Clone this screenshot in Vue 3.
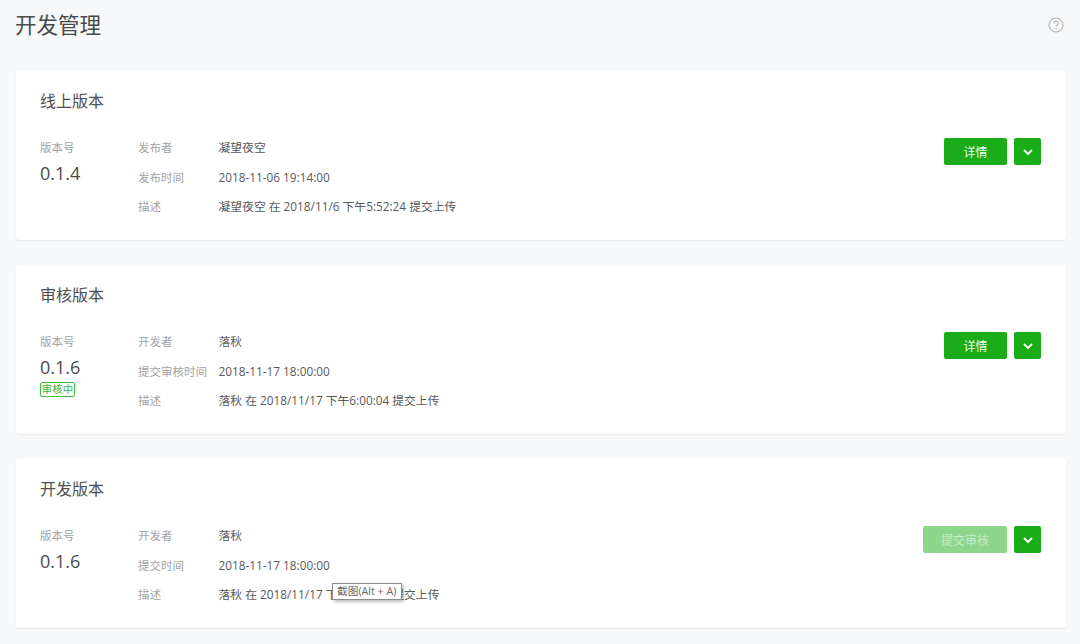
<template>
  <div class="page">
    <div class="page-head">
      <h1 class="page-title">开发管理</h1>
      <svg class="help" width="16" height="16" viewBox="0 0 16 16">
        <circle cx="8" cy="8" r="7" fill="none" stroke="#b5b5b5" stroke-width="1.2" />
        <path d="M5.9 6.3a2.1 2.1 0 1 1 3.3 1.7c-.8.5-1.2.9-1.2 1.8" fill="none" stroke="#b5b5b5" stroke-width="1.2" />
        <circle cx="8" cy="11.8" r=".8" fill="#b5b5b5" />
      </svg>
    </div>
    <section v-for="v in versions" :key="v.title" class="card">
      <h2 class="card-title">{{ v.title }}</h2>
      <div class="card-body">
        <div class="ver">
          <div class="label">版本号</div>
          <div class="ver-num">{{ v.version }}</div>
          <span v-if="v.tag" class="tag">{{ v.tag }}</span>
        </div>
        <div class="info">
          <template v-for="r in v.rows" :key="r[0]">
            <div class="label">{{ r[0] }}</div>
            <div class="val">{{ r[1] }}</div>
          </template>
          <div v-if="v.tip" class="tip">截图(Alt + A)</div>
        </div>
        <div class="actions">
          <button class="btn" :class="{ off: v.disabled }">{{ v.action }}</button>
          <button class="btn more">
            <svg width="12" height="12" viewBox="0 0 12 12">
              <path d="M2 4l4 4 4-4" fill="none" stroke="#fff" stroke-width="1.8" />
            </svg>
          </button>
        </div>
      </div>
    </section>
  </div>
</template>

<script setup>
const versions = [
  {
    title: '线上版本',
    version: '0.1.4',
    action: '详情',
    rows: [
      ['发布者', '凝望夜空'],
      ['发布时间', '2018-11-06 19:14:00'],
      ['描述', '凝望夜空 在 2018/11/6 下午5:52:24 提交上传']
    ]
  },
  {
    title: '审核版本',
    version: '0.1.6',
    tag: '审核中',
    action: '详情',
    rows: [
      ['开发者', '落秋'],
      ['提交审核时间', '2018-11-17 18:00:00'],
      ['描述', '落秋 在 2018/11/17 下午6:00:04 提交上传']
    ]
  },
  {
    title: '开发版本',
    version: '0.1.6',
    action: '提交审核',
    disabled: true,
    tip: true,
    rows: [
      ['开发者', '落秋'],
      ['提交时间', '2018-11-17 18:00:00'],
      ['描述', '落秋 在 2018/11/17 下午6:00:04 提交上传']
    ]
  }
]
</script>

<style>
html, body { background: #f7f8fa; }
</style>

<style scoped>
.page {
  height: 644px;
  overflow: hidden;
  box-sizing: border-box;
  padding: 0 14px 0 16px;
  background: #f7f8fa;
  font-family: "Open Sans", "Noto Sans CJK SC", sans-serif;
  color: #4a4a4a;
}
.page-head { display: flex; justify-content: space-between; align-items: center; height: 50px; margin-bottom: 21px; }
.page-title { margin: 0 0 0 -1px; font-size: 21.5px; font-weight: 400; line-height: 50px; color: #4a4a4a; }
.help { margin-right: 2px; }
.card {
  height: 169px;
  box-sizing: border-box;
  margin-bottom: 25px;
  padding: 0 25px 0 24px;
  background: #fff;
  border-radius: 3px;
  box-shadow: 0 1px 2px rgba(0, 0, 0, 0.07);
}
.card-title { margin: 0; padding-top: 18px; font-size: 16px; font-weight: 400; line-height: 24px; color: #4f4f4f; }
.card-body { display: flex; margin-top: 20px; }
.ver { width: 98px; }
.ver-num { margin-top: 6px; font-size: 18px; line-height: 26px; color: #4a4a4a; }
.label { font-size: 11.5px; line-height: 29.5px; height: 29.5px; color: #a3a3a3; }
.ver .label { height: 29px; line-height: 29.5px; margin-bottom: -8px; }
.tag {
  display: block;
  box-sizing: border-box;
  width: 35px;
  height: 15px;
  margin-top: 2px;
  border: 1px solid #3fbf3e;
  border-radius: 2px;
  font-size: 10.5px;
  line-height: 13px;
  text-align: center;
  color: #3bb53a;
}
.info { position: relative; flex: 1; display: grid; grid-template-columns: 80.5px 1fr; align-content: start; }
.val { font-size: 11.8px; line-height: 29px; height: 29.5px; color: #5a5a5a; }
.tip {
  position: absolute;
  left: 194px;
  top: 62px;
  box-sizing: border-box;
  padding: 0 4px;
  height: 17px;
  width: 70px;
  border: 1px solid #8c8c8c;
  background: #fff;
  font-size: 10.7px;
  line-height: 14px;
  white-space: nowrap;
  color: #666;
  box-shadow: 2px 2px 3px rgba(0, 0, 0, 0.25);
}
.actions { display: flex; gap: 7px; align-items: flex-start; margin-top: 5px; }
.btn {
  height: 27px;
  min-width: 63px;
  padding: 0 18px;
  border: 0;
  border-radius: 2px;
  background: #1aad19;
  color: #f2fbf2;
  font: inherit;
  font-size: 12px;
}
.btn.off { background: #8dd68c; color: #c6ebc5; }
.btn.more { display: flex; align-items: center; justify-content: center; width: 27px; min-width: 27px; padding: 0; }
</style>
